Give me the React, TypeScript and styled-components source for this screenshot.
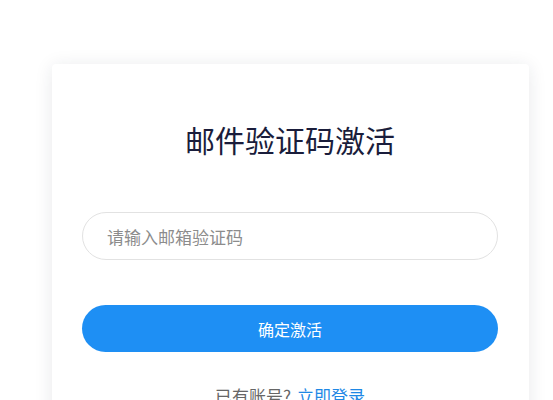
import styled, { createGlobalStyle } from "styled-components";

const GlobalStyle = createGlobalStyle`
  html, body {
    margin: 0;
    padding: 0;
    background: #ffffff;
    font-family: "Noto Sans CJK SC", "Noto Sans", sans-serif;
  }
`;

const Page = styled.div`
  padding: 64px 0 0 52px;
  height: 400px;
  box-sizing: border-box;
  overflow: hidden;
`;

const Card = styled.div`
  width: 477px;
  box-sizing: border-box;
  padding: 54px 31px 40px 30px;
  background: #fff;
  border-radius: 4px;
  box-shadow: 0 2px 18px rgba(30, 40, 60, 0.1);
  display: flex;
  flex-direction: column;
`;

const Title = styled.h1`
  margin: 0;
  font-size: 30px;
  line-height: 42px;
  font-weight: 400;
  color: #1a1d3b;
  text-align: center;
`;

const CodeInput = styled.input`
  margin-top: 52px;
  height: 48px;
  box-sizing: border-box;
  border: 1px solid #e2e2e2;
  border-radius: 24px;
  padding: 0 24px;
  font-family: inherit;
  font-size: 17px;
  color: #333;
  outline: none;

  &::placeholder {
    color: #8c8c8c;
  }
`;

const SubmitButton = styled.button`
  margin-top: 45px;
  height: 47px;
  border: none;
  border-radius: 24px;
  background: #1e8ff4;
  color: #fff;
  font-family: inherit;
  font-size: 16px;
  cursor: pointer;
`;

const Footer = styled.p`
  margin: 32px 0 0;
  font-size: 17px;
  line-height: 24px;
  color: #666;
  text-align: center;
`;

const Link = styled.a`
  color: #1e88e5;
  text-decoration: none;
  margin-left: 6px;
`;

export default function App() {
  return (
    <>
      <GlobalStyle />
      <Page>
        <Card>
          <Title>邮件验证码激活</Title>
          <CodeInput placeholder="请输入邮箱验证码" />
          <SubmitButton>确定激活</SubmitButton>
          <Footer>
            已有账号?<Link href="#">立即登录</Link>
          </Footer>
        </Card>
      </Page>
    </>
  );
}
